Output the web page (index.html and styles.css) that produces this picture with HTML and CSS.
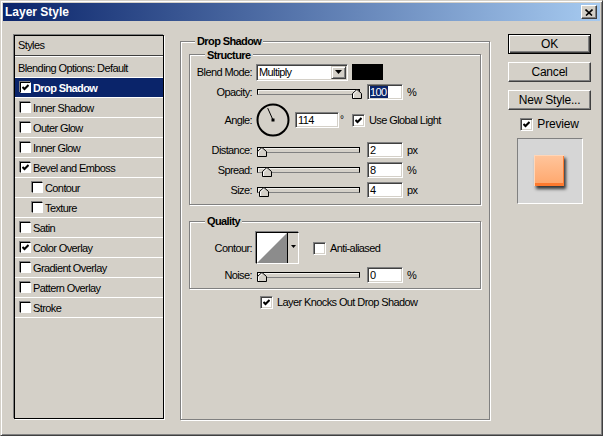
FILE: index.html
```html
<!DOCTYPE html>
<html lang="en">
<head>
    <meta charset="UTF-8">
    <title>Layer Style</title>
    <link rel="stylesheet" href="styles.css">
</head>
<body>
    <div class="window">
        <div class="titlebar">
            <span class="title">Layer Style</span>
            <span class="close-btn">
                <svg width="8" height="7" viewBox="0 0 8 7"><path d="M0.5 0.5L7 6.5M7.5 0.5L1 6.5" stroke="#000" stroke-width="1.6"/></svg>
            </span>
        </div>

        <div class="dialog">
            <!-- style list -->
            <div class="style-list">
                <div class="list-head">Styles</div>
                <div class="list-row plain">Blending Options: Default</div>
                <div class="list-row selected"><span class="cb"><svg width="7" height="7" viewBox="0 0 7 7"><polyline points="0.5,3 2.5,5 6.5,1" fill="none" stroke="#000" stroke-width="2"/></svg></span>Drop Shadow</div>
                <div class="list-row"><span class="cb"></span>Inner Shadow</div>
                <div class="list-row"><span class="cb"></span>Outer Glow</div>
                <div class="list-row"><span class="cb"></span>Inner Glow</div>
                <div class="list-row"><span class="cb"><svg width="7" height="7" viewBox="0 0 7 7"><polyline points="0.5,3 2.5,5 6.5,1" fill="none" stroke="#000" stroke-width="2"/></svg></span>Bevel and Emboss</div>
                <div class="list-row sub"><span class="cb"></span>Contour</div>
                <div class="list-row sub"><span class="cb"></span>Texture</div>
                <div class="list-row"><span class="cb"></span>Satin</div>
                <div class="list-row"><span class="cb"><svg width="7" height="7" viewBox="0 0 7 7"><polyline points="0.5,3 2.5,5 6.5,1" fill="none" stroke="#000" stroke-width="2"/></svg></span>Color Overlay</div>
                <div class="list-row"><span class="cb"></span>Gradient Overlay</div>
                <div class="list-row"><span class="cb"></span>Pattern Overlay</div>
                <div class="list-row"><span class="cb"></span>Stroke</div>
            </div>

            <!-- drop shadow settings -->
            <div class="group panel">
                <div class="group-title">Drop Shadow</div>

                <div class="group structure">
                    <div class="group-title inner">Structure</div>

                    <div class="field">
                        <label>Blend Mode:</label>
                        <div class="ctl">
                            <div class="select">
                                <span>Multiply</span>
                                <span class="drop-btn"><svg width="7" height="4" viewBox="0 0 7 4"><path d="M0 0H7L3.5 4Z" fill="#000"/></svg></span>
                            </div>
                            <span class="swatch"></span>
                        </div>
                    </div>

                    <div class="field">
                        <label>Opacity:</label>
                        <div class="ctl">
                            <div class="slider"><div class="track"></div><svg class="thumb" style="left: 96px" width="10" height="10" viewBox="0 0 10 10"><path d="M0.5 9.5V4.5L5 0.5L9.5 4.5V9.5Z" fill="#d4d0c8" stroke="#000"/><path d="M1.5 9V4.9L5 1.8" fill="none" stroke="#fff"/></svg></div>
                            <div class="num"><span class="sel">100</span></div>
                            <span class="unit">%</span>
                        </div>
                    </div>

                    <div class="field angle">
                        <label>Angle:</label>
                        <div class="ctl">
                            <svg class="dial" width="34" height="34" viewBox="0 0 34 34">
                                <circle cx="17" cy="17" r="15.5" fill="none" stroke="#000" stroke-width="2"/>
                                <line x1="17" y1="17" x2="11.7" y2="5.1" stroke="#000"/>
                                <rect x="15.5" y="15.5" width="3" height="3" fill="#000"/>
                            </svg>
                            <div class="num wide">114</div>
                            <span class="deg">°</span>
                            <span class="check"><svg width="7" height="7" viewBox="0 0 7 7"><polyline points="0.5,3 2.5,5 6.5,1" fill="none" stroke="#000" stroke-width="2"/></svg></span>
                            <span class="check-label">Use Global Light</span>
                        </div>
                    </div>

                    <div class="field">
                        <label>Distance:</label>
                        <div class="ctl">
                            <div class="slider"><div class="track"></div><svg class="thumb" style="left: 1px" width="10" height="10" viewBox="0 0 10 10"><path d="M0.5 9.5V4.5L5 0.5L9.5 4.5V9.5Z" fill="#d4d0c8" stroke="#000"/><path d="M1.5 9V4.9L5 1.8" fill="none" stroke="#fff"/></svg></div>
                            <div class="num">2</div>
                            <span class="unit">px</span>
                        </div>
                    </div>

                    <div class="field">
                        <label>Spread:</label>
                        <div class="ctl">
                            <div class="slider"><div class="track"></div><svg class="thumb" style="left: 6px" width="10" height="10" viewBox="0 0 10 10"><path d="M0.5 9.5V4.5L5 0.5L9.5 4.5V9.5Z" fill="#d4d0c8" stroke="#000"/><path d="M1.5 9V4.9L5 1.8" fill="none" stroke="#fff"/></svg></div>
                            <div class="num">8</div>
                            <span class="unit">%</span>
                        </div>
                    </div>

                    <div class="field">
                        <label>Size:</label>
                        <div class="ctl">
                            <div class="slider"><div class="track"></div><svg class="thumb" style="left: 3px" width="10" height="10" viewBox="0 0 10 10"><path d="M0.5 9.5V4.5L5 0.5L9.5 4.5V9.5Z" fill="#d4d0c8" stroke="#000"/><path d="M1.5 9V4.9L5 1.8" fill="none" stroke="#fff"/></svg></div>
                            <div class="num">4</div>
                            <span class="unit">px</span>
                        </div>
                    </div>
                </div>

                <div class="group quality">
                    <div class="group-title inner">Quality</div>

                    <div class="field contour">
                        <label>Contour:</label>
                        <div class="ctl">
                            <div class="contour-pick">
                                <svg class="curve" width="30" height="30" viewBox="0 0 30 30"><rect width="30" height="30" fill="#fff"/><path d="M0 30L30 0V30Z" fill="#8c8c8c"/></svg>
                                <span class="pick-arrow"><svg width="5" height="3" viewBox="0 0 5 3"><path d="M0 0H5L2.5 3Z" fill="#000"/></svg></span>
                            </div>
                            <span class="check aa"></span>
                            <span class="check-label">Anti-aliased</span>
                        </div>
                    </div>

                    <div class="field noise">
                        <label>Noise:</label>
                        <div class="ctl">
                            <div class="slider"><div class="track"></div><svg class="thumb" style="left: 1px" width="10" height="10" viewBox="0 0 10 10"><path d="M0.5 9.5V4.5L5 0.5L9.5 4.5V9.5Z" fill="#d4d0c8" stroke="#000"/><path d="M1.5 9V4.9L5 1.8" fill="none" stroke="#fff"/></svg></div>
                            <div class="num">0</div>
                            <span class="unit">%</span>
                        </div>
                    </div>
                </div>

                <div class="knockout">
                    <span class="check"><svg width="7" height="7" viewBox="0 0 7 7"><polyline points="0.5,3 2.5,5 6.5,1" fill="none" stroke="#000" stroke-width="2"/></svg></span>
                    <span class="check-label">Layer Knocks Out Drop Shadow</span>
                </div>
            </div>

            <!-- buttons and preview -->
            <div class="actions">
                <div class="buttons">
                    <button class="btn default">OK</button>
                    <button class="btn">Cancel</button>
                    <button class="btn">New Style...</button>
                </div>
                <div class="preview-toggle">
                    <span class="check"><svg width="7" height="7" viewBox="0 0 7 7"><polyline points="0.5,3 2.5,5 6.5,1" fill="none" stroke="#000" stroke-width="2"/></svg></span>
                    <span>Preview</span>
                </div>
                <div class="preview-box">
                    <div class="preview-swatch"></div>
                </div>
            </div>
        </div>
    </div>
</body>
</html>
```

FILE: styles.css
```css
:root {
    --face: #d4d0c8;
    --shadow: #808080;
    --dark: #404040;
    --highlight: #ffffff;
    --select: #0a246a;
}

body {
    margin: 0;
    background: var(--face);
    font-family: "Liberation Sans", Arial, sans-serif;
    font-size: 11px;
    letter-spacing: -0.6px;
    color: #000;
}

.window {
    width: 603px;
    height: 436px;
    box-sizing: border-box;
    padding: 2px;
    border: 1px solid;
    border-color: var(--face) var(--dark) var(--dark) var(--face);
    box-shadow: inset 1px 1px var(--highlight), inset -1px -1px var(--shadow);
    background: var(--face);
}

/* title bar */
.titlebar {
    height: 18px;
    display: flex;
    align-items: center;
    justify-content: space-between;
    padding: 0 3px 0 2px;
    background: linear-gradient(to right, #0a246a, #a6caf0);
    color: #fff;
    font-size: 12px;
    font-weight: bold;
    letter-spacing: 0;
}

.close-btn {
    width: 16px;
    height: 14px;
    box-sizing: border-box;
    display: flex;
    align-items: center;
    justify-content: center;
    background: var(--face);
    border: 1px solid;
    border-color: var(--highlight) var(--dark) var(--dark) var(--highlight);
    box-shadow: inset -1px -1px var(--shadow);
}

.dialog {
    display: flex;
    align-items: flex-start;
    padding: 14px 0 0 11px;
}

/* styles list */
.style-list {
    width: 150px;
    height: 384px;
    box-sizing: border-box;
    border: 1px solid #000;
    box-shadow: -1px -1px 0 var(--shadow), 1px 1px 0 var(--highlight);
}

.list-head {
    height: 19px;
    line-height: 19px;
    padding-left: 3px;
    border-bottom: 1px solid var(--dark);
    box-shadow: 0 1px 0 var(--highlight);
    margin-bottom: 2px;
}

.list-row {
    height: 20px;
    box-sizing: border-box;
    display: flex;
    align-items: center;
    gap: 2px;
    padding-left: 5px;
    border-bottom: 1px solid var(--highlight);
}

.list-row.plain {
    padding-left: 3px;
}

.list-row.sub {
    padding-left: 17px;
}

.list-row.selected {
    background: var(--select);
    color: #fff;
    font-weight: bold;
}

.cb {
    width: 11px;
    height: 11px;
    box-sizing: border-box;
    display: flex;
    align-items: center;
    justify-content: center;
    background: #fff;
    border: 1px solid;
    border-color: #000 var(--highlight) var(--highlight) #000;
    box-shadow: -1px -1px 0 var(--shadow);
    flex-shrink: 0;
}

/* group boxes */
.group {
    border: 1px solid var(--shadow);
    box-shadow: inset 1px 1px var(--highlight), 1px 1px var(--highlight);
}

.group-title {
    width: fit-content;
    margin: -7px 0 0 6px;
    padding: 0 2px;
    line-height: 13px;
    background: var(--face);
    font-weight: bold;
}

.group-title.inner {
    margin-left: 15px;
}

.panel {
    width: 310px;
    height: 379px;
    box-sizing: border-box;
    margin: 6px 0 0 16px;
    padding: 0 8px;
}

.structure {
    margin-top: 6px;
    padding: 1px 0 4px;
}

.quality {
    margin-top: 16px;
    padding-bottom: 3px;
}

.field {
    display: grid;
    grid-template-columns: 62px auto;
    column-gap: 4px;
    align-items: center;
    height: 20px;
}

.field label {
    text-align: right;
}

.field.angle {
    height: 36px;
    margin-bottom: 2px;
}

.field.contour {
    height: 32px;
    margin-top: 4px;
}

.field.noise {
    margin-top: 1px;
}

.ctl {
    display: flex;
    align-items: center;
}

/* controls */
.select {
    width: 92px;
    height: 17px;
    box-sizing: border-box;
    display: flex;
    align-items: center;
    justify-content: space-between;
    padding: 0 1px 0 2px;
    background: #fff;
    border: 1px solid;
    border-color: var(--shadow) var(--highlight) var(--highlight) var(--shadow);
    box-shadow: inset 1px 1px var(--dark), inset -1px -1px var(--face);
}

.drop-btn {
    width: 15px;
    height: 13px;
    box-sizing: border-box;
    display: flex;
    align-items: center;
    justify-content: center;
    background: var(--face);
    border: 1px solid;
    border-color: var(--face) var(--dark) var(--dark) var(--face);
    box-shadow: inset 1px 1px var(--highlight), inset -1px -1px var(--shadow);
}

.swatch {
    width: 31px;
    height: 16px;
    margin-left: 4px;
    background: #000;
}

.slider {
    position: relative;
    width: 108px;
    height: 10px;
    margin-top: 3px;
}

.track {
    width: 103px;
    height: 6px;
    margin-left: 1px;
    box-sizing: border-box;
    background: var(--face);
    border: 1px solid #000;
    border-bottom-color: var(--shadow);
    box-shadow: inset 1px 1px #f4f3ef;
}

.thumb {
    position: absolute;
    top: 0;
}

.num {
    width: 36px;
    height: 16px;
    box-sizing: border-box;
    margin-left: 3px;
    padding: 0 0 0 2px;
    line-height: 14px;
    background: #fff;
    border: 1px solid;
    border-color: var(--shadow) var(--highlight) var(--highlight) var(--shadow);
    box-shadow: inset 1px 1px var(--dark), inset -1px -1px var(--face);
}

.num.wide {
    width: 44px;
    margin-left: 5px;
}

.num .sel {
    background: var(--select);
    color: #fff;
    padding-right: 1px;
}

.unit {
    margin-left: 4px;
}

.deg {
    width: 12px;
    padding-left: 1px;
    align-self: flex-start;
    margin-top: 11px;
    font-size: 10px;
}

.check {
    width: 13px;
    height: 13px;
    box-sizing: border-box;
    display: flex;
    align-items: center;
    justify-content: center;
    background: #fff;
    border: 1px solid;
    border-color: var(--shadow) var(--highlight) var(--highlight) var(--shadow);
    box-shadow: inset 1px 1px var(--dark), inset -1px -1px var(--face);
    flex-shrink: 0;
}

.check-label {
    margin-left: 4px;
}

.check.aa {
    margin-left: 14px;
}

.contour-pick {
    width: 43px;
    height: 32px;
    box-sizing: border-box;
    display: flex;
    border: 1px solid;
    border-color: #000 var(--highlight) var(--highlight) #000;
    box-shadow: -1px -1px 0 var(--shadow);
    background: var(--face);
}

.pick-arrow {
    flex: 1;
    display: flex;
    justify-content: center;
    padding-top: 12px;
    border-left: 1px solid #000;
}

.knockout {
    height: 20px;
    margin-top: 3px;
    padding-left: 71px;
    display: flex;
    align-items: center;
}

/* right column */
.actions {
    width: 83px;
    margin: -1px 0 0 18px;
    font-size: 12px;
    letter-spacing: -0.2px;
}

.buttons {
    display: flex;
    flex-direction: column;
    gap: 8px;
}

.btn {
    height: 20px;
    padding: 0;
    box-sizing: border-box;
    background: var(--face);
    color: #000;
    font: inherit;
    letter-spacing: inherit;
    border: 1px solid;
    border-color: var(--highlight) var(--dark) var(--dark) var(--highlight);
    box-shadow: inset -1px -1px var(--shadow);
}

.btn.default {
    border-color: #000;
    box-shadow: inset 1px 1px var(--highlight), inset -1px -1px var(--dark), inset -2px -2px var(--shadow);
}

.preview-toggle {
    height: 20px;
    margin-top: 4px;
    display: flex;
    align-items: center;
    justify-content: center;
    gap: 4px;
}

.preview-box {
    width: 66px;
    height: 66px;
    box-sizing: border-box;
    margin: 4px auto 0;
    display: flex;
    align-items: center;
    justify-content: center;
    background: #d6d6d6;
    border: 1px solid;
    border-color: var(--shadow) var(--highlight) var(--highlight) var(--shadow);
}

.preview-swatch {
    width: 30px;
    height: 31px;
    margin: 0 1px 1px 0;
    background: linear-gradient(#ffc59c, #ffa66b);
    box-shadow: inset 1px 1px #ffd6b8, inset -1px -3px #ff7a2e, 2px 3px 3px rgba(0, 0, 0, 0.75);
}
```
